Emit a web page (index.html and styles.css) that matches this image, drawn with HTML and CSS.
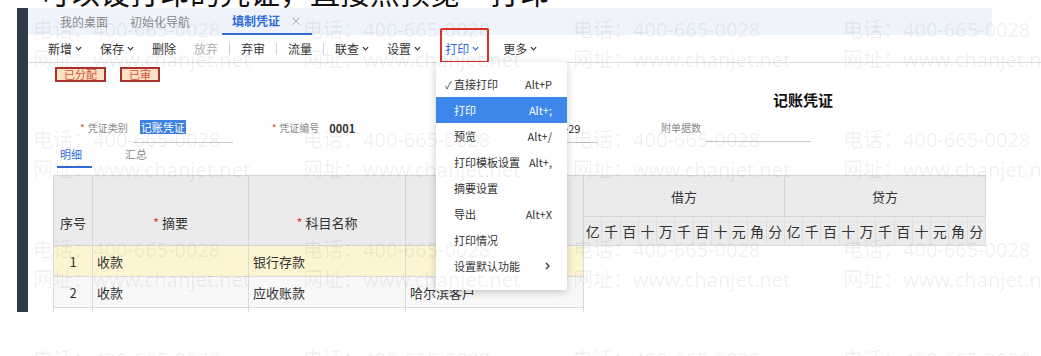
FILE: index.html
```html
<!DOCTYPE html>
<html lang="zh-CN">
<head>
  <meta charset="UTF-8">
  <title>填制凭证 - 打印</title>
  <link rel="stylesheet" href="styles.css">
</head>
<body>

<div class="headline"><span>可以设打印的凭证，直接点预览一打印</span></div>

<div class="shot">
  <div class="sidebar"></div>
  <div class="main">
    <div class="tabs">
      <span class="tab">我的桌面</span>
      <span class="tab">初始化导航</span>
      <span class="tab active">填制凭证<i class="close">×</i></span>
    </div>

    <div class="toolbar">
      <span class="tool">新增<svg class="chev" viewBox="0 0 8 5"><polyline points="1,1 4,4 7,1"/></svg></span>
      <span class="tool">保存<svg class="chev" viewBox="0 0 8 5"><polyline points="1,1 4,4 7,1"/></svg></span>
      <span class="tool">删除</span>
      <span class="tool disabled">放弃</span>
      <span class="sep"></span>
      <span class="tool">弃审</span>
      <span class="sep"></span>
      <span class="tool">流量</span>
      <span class="sep"></span>
      <span class="tool">联查<svg class="chev" viewBox="0 0 8 5"><polyline points="1,1 4,4 7,1"/></svg></span>
      <span class="tool">设置<svg class="chev" viewBox="0 0 8 5"><polyline points="1,1 4,4 7,1"/></svg></span>
      <span class="tool open">打印<svg class="chev" viewBox="0 0 8 5"><polyline points="1,1 4,4 7,1"/></svg></span>
      <span class="tool after-open">更多<svg class="chev" viewBox="0 0 8 5"><polyline points="1,1 4,4 7,1"/></svg></span>
    </div>

    <div class="stamps">
      <span class="stamp">已分配</span>
      <span class="stamp">已审</span>
    </div>

    <div class="voucher-title">记账凭证</div>

    <div class="form">
      <div class="field f-type">
        <span class="req">*</span><span class="label">凭证类别</span>
        <span class="input wide"><span class="selected">记账凭证</span></span>
      </div>
      <div class="field f-no">
        <span class="req">*</span><span class="label">凭证编号</span>
        <span class="value">0001</span>
      </div>
      <div class="field f-date">
        <span class="req">*</span><span class="label">日期</span>
        <span class="input date">2019-04-29</span>
      </div>
      <div class="field f-att">
        <span class="label">附单据数</span>
        <span class="input att"></span>
      </div>
    </div>

    <div class="subtabs">
      <span class="subtab active">明细</span>
      <span class="subtab">汇总</span>
    </div>

    <table class="grid">
      <colgroup>
        <col style="width:39px">
        <col style="width:156px">
        <col style="width:157px">
        <col style="width:178px">
        <col span="22">
      </colgroup>
      <thead>
        <tr class="h1">
          <th rowspan="2" class="low">序号</th>
          <th rowspan="2" class="low"><span class="req">*</span>摘要</th>
          <th rowspan="2" class="low"><span class="req">*</span>科目名称</th>
          <th rowspan="2" class="low">辅助项</th>
          <th colspan="11">借方</th>
          <th colspan="11">贷方</th>
        </tr>
        <tr class="digits">
          <th>亿</th><th>千</th><th>百</th><th>十</th><th>万</th><th>千</th><th>百</th><th>十</th><th>元</th><th>角</th><th>分</th>
          <th>亿</th><th>千</th><th>百</th><th>十</th><th>万</th><th>千</th><th>百</th><th>十</th><th>元</th><th>角</th><th>分</th>
        </tr>
      </thead>
      <tbody>
        <tr class="current">
          <td class="num">1</td><td>收款</td><td>银行存款</td><td></td>
          <td colspan="22" class="blank"></td>
        </tr>
        <tr>
          <td class="num">2</td><td>收款</td><td>应收账款</td><td>哈尔滨客户</td>
          <td colspan="22" class="blank"></td>
        </tr>
        <tr class="empty">
          <td></td><td></td><td></td><td></td>
          <td colspan="22" class="blank"></td>
        </tr>
      </tbody>
    </table>

    <div class="menu">
      <div class="item"><span><i class="check">✓</i>直接打印</span><span>Alt+P</span></div>
      <div class="item hover"><span>打印</span><span>Alt+;</span></div>
      <div class="item"><span>预览</span><span>Alt+/</span></div>
      <div class="item"><span>打印模板设置</span><span>Alt+,</span></div>
      <div class="item"><span>摘要设置</span><span></span></div>
      <div class="item"><span>导出</span><span>Alt+X</span></div>
      <div class="item"><span>打印情况</span><span></span></div>
      <div class="item"><span>设置默认功能</span><svg class="arrow" viewBox="0 0 5 8"><polyline points="1,1 4,4 1,7"/></svg></div>
    </div>
  </div>
</div>

<div class="watermark">
  <div class="mark"><span>电话：400-665-0028</span><span>网址：www.chanjet.net</span></div>
  <div class="mark"><span>电话：400-665-0028</span><span>网址：www.chanjet.net</span></div>
  <div class="mark"><span>电话：400-665-0028</span><span>网址：www.chanjet.net</span></div>
  <div class="mark"><span>电话：400-665-0028</span><span>网址：www.chanjet.net</span></div>
  <div class="mark"><span>电话：400-665-0028</span><span>网址：www.chanjet.net</span></div>
  <div class="mark"><span>电话：400-665-0028</span><span>网址：www.chanjet.net</span></div>
  <div class="mark"><span>电话：400-665-0028</span><span>网址：www.chanjet.net</span></div>
  <div class="mark"><span>电话：400-665-0028</span><span>网址：www.chanjet.net</span></div>
  <div class="mark"><span>电话：400-665-0028</span><span>网址：www.chanjet.net</span></div>
  <div class="mark"><span>电话：400-665-0028</span><span>网址：www.chanjet.net</span></div>
  <div class="mark"><span>电话：400-665-0028</span><span>网址：www.chanjet.net</span></div>
  <div class="mark"><span>电话：400-665-0028</span><span>网址：www.chanjet.net</span></div>
  <div class="mark"><span>电话：400-665-0028</span><span>网址：www.chanjet.net</span></div>
  <div class="mark"><span>电话：400-665-0028</span><span>网址：www.chanjet.net</span></div>
  <div class="mark"><span>电话：400-665-0028</span><span>网址：www.chanjet.net</span></div>
  <div class="mark"><span>电话：400-665-0028</span><span>网址：www.chanjet.net</span></div>
</div>

</body>
</html>
```

FILE: styles.css
```css
body {
  margin: 0;
  width: 1041px;
  height: 356px;
  overflow: hidden;
  position: relative;
  background: #fff;
  font-family: "Noto Sans", "Noto Sans CJK SC", sans-serif;
  color: #333;
}
.headline {
  height: 8px;
  overflow: hidden;
  padding-left: 40px;
}
.headline span {
  display: block;
  margin-top: -24px;
  font-family: "Noto Sans CJK SC", sans-serif;
  font-size: 30px;
  line-height: 30px;
  color: #111;
  white-space: nowrap;
}

/* embedded screenshot */
.shot {
  display: flex;
  margin-left: 17px;
  height: 304px;
  overflow: hidden;
}
.sidebar {
  width: 11px;
  background: #303b49;
}
.main {
  flex: 1;
  position: relative;
  background: #fff;
  font-family: "Noto Sans CJK SC", sans-serif;
}
.tabs {
  height: 27px;
  margin-right: 49px;
  background: #eef3fc;
  display: flex;
  align-items: center;
  gap: 22px;
  padding-left: 32px;
  font-size: 12px;
  color: #8a8a8a;
}
.tab.active {
  margin-left: 10px;
  padding: 0 10px;
  height: 27px;
  line-height: 25px;
  box-sizing: border-box;
  border-bottom: 2px solid #2f6bd8;
  color: #2f6bd8;
  font-weight: bold;
}
.close {
  font-style: normal;
  font-weight: normal;
  color: #b5b5b5;
  margin-left: 10px;
}
.toolbar {
  height: 27px;
  border-bottom: 1px solid #dcdcdc;
  display: flex;
  align-items: center;
  gap: 18px;
  padding-left: 20px;
  font-size: 12px;
}
.tool {
  display: flex;
  align-items: center;
  line-height: 27px;
  color: #333;
}
.tool.disabled {
  color: #b0b0b0;
}
.sep {
  width: 1px;
  height: 12px;
  background: #d0d0d0;
  margin: 0 -7px;
}
.chev {
  width: 7px;
  height: 5px;
  margin-left: 3px;
  fill: none;
  stroke: currentColor;
  stroke-width: 1.4;
}
.tool.open {
  position: relative;
  margin-left: 6px;
  color: #2f6bd8;
}
.tool.open::after {
  content: "";
  position: absolute;
  left: -5px;
  right: -10px;
  top: -7px;
  bottom: -1px;
  border: 2px solid #dd3129;
  border-radius: 2px;
}
.tool.after-open {
  margin-left: 6px;
}

.stamps {
  display: flex;
  gap: 14px;
  margin-top: 4px;
  padding-left: 27px;
}
.stamp {
  border: 2px solid #a8322d;
  background: #fce0c0;
  color: #d65040;
  font-size: 11px;
  line-height: 11px;
  padding: 0 7px;
}
.voucher-title {
  margin-top: 8px;
  padding-left: 745px;
  font-size: 15px;
  line-height: 20px;
  font-weight: bold;
  color: #111;
}

.form {
  display: flex;
  align-items: flex-start;
  margin-top: 10px;
  padding-left: 52px;
  font-size: 10px;
  line-height: 16px;
}
.field {
  display: flex;
  align-items: flex-start;
}
.req {
  color: #e0463a;
  margin-right: 3px;
}
.label {
  color: #888;
}
.input {
  margin-left: 5px;
  padding: 0 0 6px 7px;
  border-bottom: 1px solid #c8c8c8;
  box-sizing: border-box;
}
.input.wide {
  width: 100px;
}
.selected {
  display: inline-block;
  background: #3c80e2;
  color: #fff;
  font-size: 11px;
  padding: 0 1px;
  line-height: 14px;
}
.value {
  margin-left: 10px;
  font-size: 11px;
  font-weight: bold;
  color: #333;
}
.f-no {
  margin-left: 39px;
}
.f-date {
  margin-left: 129px;
}
.input.date {
  width: 81px;
  padding-left: 7px;
  font-size: 11px;
  color: #333;
}
.f-att {
  margin-left: 63px;
}
.input.att {
  width: 105px;
  height: 22px;
}

.subtabs {
  display: flex;
  gap: 30px;
  margin-top: 3px;
  padding-left: 29px;
  font-size: 11px;
  line-height: 16px;
  color: #888;
}
.subtab {
  padding: 0 3px 4px;
}
.subtab.active {
  width: 35px;
  box-sizing: border-box;
  border-bottom: 2px solid #2f6bd8;
  color: #2f6bd8;
}

.grid {
  margin: 7px 0 0 25px;
  width: 933px;
  table-layout: fixed;
  border-collapse: collapse;
  font-size: 13px;
  color: #333;
}
.grid th {
  background: #ebebeb;
  border: 1px solid #d6d6d6;
  font-weight: normal;
  padding: 0;
}
.grid .h1 th {
  height: 40px;
}
.grid th.low {
  padding-top: 24px;
}
.grid .digits th {
  height: 28px;
  font-size: 14px;
  border-color: #dedede;
}
.grid td {
  height: 30px;
  border: 1px solid #dcdcdc;
  padding: 0 4px;
  background: #f8f8f8;
  white-space: nowrap;
  overflow: hidden;
}
.grid td.num {
  text-align: center;
}
.grid .current td {
  background: #fdf5d1;
}
.grid td.blank {
  background: #fff;
  border: none;
}
.grid .empty td {
  background: #fff;
}

.menu {
  position: absolute;
  left: 408px;
  top: 54px;
  width: 131px;
  padding: 9px 0 11px;
  background: #fff;
  border-radius: 2px;
  box-shadow: 0 2px 8px rgba(0,0,0,0.2);
  font-size: 11px;
  color: #333;
}
.item {
  height: 26px;
  display: flex;
  align-items: center;
  justify-content: space-between;
  padding: 0 15px 0 18px;
}
.item.hover {
  background: #3d86ea;
  color: #fff;
}
.check {
  display: inline-block;
  width: 9px;
  margin-left: -9px;
  font-style: normal;
  font-size: 10px;
}
.arrow {
  width: 5px;
  height: 8px;
  margin-right: 2px;
  fill: none;
  stroke: #444;
  stroke-width: 1.5;
}

/* watermark over the picture */
.watermark {
  position: absolute;
  left: 0;
  top: 0;
  right: 0;
  bottom: 0;
  pointer-events: none;
  display: grid;
  grid-template-columns: repeat(4, 270px);
  grid-auto-rows: 110px;
  padding: 16px 0 0 33px;
  font-family: "Noto Sans", "Noto Sans CJK SC", sans-serif;
  font-size: 20px;
  line-height: 28px;
  color: rgba(0,0,0,0.065);
  white-space: nowrap;
}
.mark span {
  display: block;
}
.mark span + span {
  margin-top: 2px;
}
```
